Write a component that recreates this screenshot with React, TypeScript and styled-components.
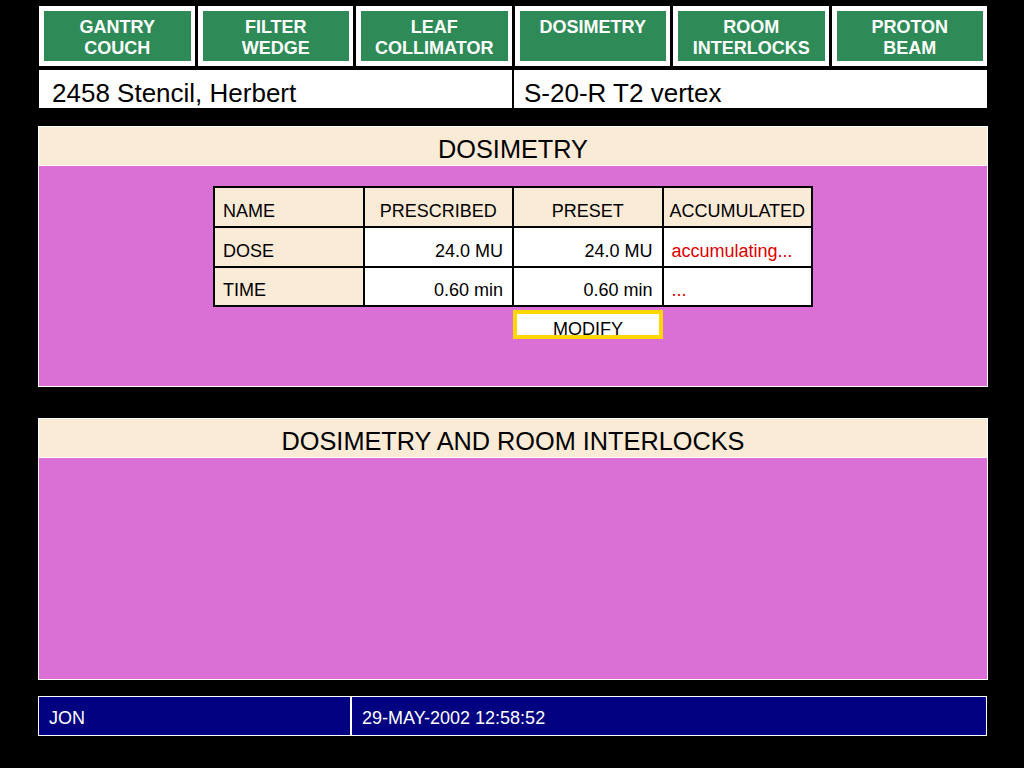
import React from "react";
import styled, { createGlobalStyle } from "styled-components";

const GlobalStyle = createGlobalStyle`
  html, body {
    margin: 0;
    padding: 0;
    background: #000;
  }
  body {
    font-family: "Liberation Sans", Arial, sans-serif;
    color: #000;
  }
  * { box-sizing: border-box; }
`;

const Screen = styled.div`
  width: 1024px;
  height: 768px;
  background: #000;
  padding: 6px 0 0 38px;
  display: flex;
  flex-direction: column;
`;

const TabBar = styled.div`
  display: flex;
  gap: 3px;
  width: 948px;
  height: 60px;
  margin-left: 1px;
`;

const Tab = styled.div`
  flex: 1;
  background: #fff;
  padding: 5px 4px 5px 5px;
`;

const TabFace = styled.div`
  height: 100%;
  background: #2e8b57;
  color: #fff;
  font-weight: bold;
  font-size: 18px;
  line-height: 21px;
  text-align: center;
  padding-top: 6px;
`;

const PatientBar = styled.div`
  display: grid;
  grid-template-columns: 473px 473px;
  gap: 2px;
  width: 948px;
  height: 38px;
  margin: 4px 0 0 1px;
`;

const PatientCell = styled.div<{ $inset: number }>`
  background: #fff;
  font-size: 26px;
  line-height: 26px;
  padding: 10px 0 0 ${(p) => p.$inset}px;
  white-space: nowrap;
  overflow: hidden;
`;

const Panel = styled.section<{ $top: number; $height: number }>`
  width: 950px;
  height: ${(p) => p.$height}px;
  margin-top: ${(p) => p.$top}px;
  border: 1px solid #fff;
  background: #da70d6;
  display: flex;
  flex-direction: column;
`;

const PanelHeader = styled.div`
  height: 39px;
  background: #faebd7;
  border-bottom: 1px solid #fff;
  font-size: 25.3px;
  line-height: 31px;
  padding-top: 7px;
  text-align: center;
`;

const PanelBody = styled.div`
  display: flex;
  flex-direction: column;
  align-items: center;
  padding-top: 20px;
`;

const DoseGrid = styled.div`
  width: 600px;
  display: grid;
  grid-template-columns: repeat(4, 1fr);
  grid-template-rows: 38px 38px 37px;
  gap: 2px;
  padding: 2px;
  background: #000;
`;

const Cell = styled.div<{ $shade?: boolean; $align: "left" | "center" | "right"; $alert?: boolean }>`
  background: ${(p) => (p.$shade ? "#faebd7" : "#fff")};
  color: ${(p) => (p.$alert ? "#dd0000" : "#000")};
  font-size: 18px;
  white-space: nowrap;
  display: flex;
  align-items: center;
  padding-top: 8px;
  justify-content: ${(p) =>
    p.$align === "left" ? "flex-start" : p.$align === "right" ? "flex-end" : "center"};
  padding-left: ${(p) => (p.$align === "left" ? "8px" : "0")};
  padding-right: ${(p) => (p.$align === "right" ? "9px" : "0")};
`;

const ActionRow = styled.div`
  width: 600px;
  display: grid;
  grid-template-columns: 300px 150px;
  margin-top: 3px;
`;

const ModifyButton = styled.button`
  grid-column: 2;
  width: 150px;
  height: 29px;
  border: 4px solid #ffd700;
  background: #fff;
  font-family: inherit;
  font-size: 18px;
  line-height: 20px;
  padding: 5px 0 0;
  margin: 0;
  overflow: hidden;
  text-align: center;
  color: #000;
  cursor: pointer;
`;

const StatusBar = styled.div`
  width: 949px;
  height: 40px;
  margin-top: 16px;
  border: 1px solid #fff;
  background: #000080;
  display: grid;
  grid-template-columns: 311px 1fr;
`;

const StatusCell = styled.div<{ $divider?: boolean }>`
  color: #fff;
  font-size: 18px;
  line-height: 34px;
  padding: 4px 0 0 10px;
  white-space: nowrap;
  border-left: ${(p) => (p.$divider ? "2px solid #fff" : "none")};
`;

const tabs = [
  ["GANTRY", "COUCH"],
  ["FILTER", "WEDGE"],
  ["LEAF", "COLLIMATOR"],
  ["DOSIMETRY"],
  ["ROOM", "INTERLOCKS"],
  ["PROTON", "BEAM"],
];

type Row = { cells: { text: string; shade?: boolean; align: "left" | "center" | "right"; alert?: boolean }[] };

const rows: Row[] = [
  {
    cells: [
      { text: "NAME", shade: true, align: "left" },
      { text: "PRESCRIBED", shade: true, align: "center" },
      { text: "PRESET", shade: true, align: "center" },
      { text: "ACCUMULATED", shade: true, align: "center" },
    ],
  },
  {
    cells: [
      { text: "DOSE", shade: true, align: "left" },
      { text: "24.0 MU", align: "right" },
      { text: "24.0 MU", align: "right" },
      { text: "accumulating...", align: "left", alert: true },
    ],
  },
  {
    cells: [
      { text: "TIME", shade: true, align: "left" },
      { text: "0.60 min", align: "right" },
      { text: "0.60 min", align: "right" },
      { text: "...", align: "left", alert: true },
    ],
  },
];

export default function App() {
  return (
    <>
      <GlobalStyle />
      <Screen>
        <TabBar>
          {tabs.map((lines) => (
            <Tab key={lines.join(" ")}>
              <TabFace>
                {lines.map((l, i) => (
                  <div key={i}>{l}</div>
                ))}
              </TabFace>
            </Tab>
          ))}
        </TabBar>

        <PatientBar>
          <PatientCell $inset={13}>2458 Stencil, Herbert</PatientCell>
          <PatientCell $inset={10}>S-20-R T2 vertex</PatientCell>
        </PatientBar>

        <Panel $top={18} $height={261}>
          <PanelHeader>DOSIMETRY</PanelHeader>
          <PanelBody>
            <DoseGrid>
              {rows.map((r, ri) =>
                r.cells.map((c, ci) => (
                  <Cell key={`${ri}-${ci}`} $shade={c.shade} $align={c.align} $alert={c.alert}>
                    {c.text}
                  </Cell>
                ))
              )}
            </DoseGrid>
            <ActionRow>
              <ModifyButton>MODIFY</ModifyButton>
            </ActionRow>
          </PanelBody>
        </Panel>

        <Panel $top={31} $height={262}>
          <PanelHeader>DOSIMETRY AND ROOM INTERLOCKS</PanelHeader>
        </Panel>

        <StatusBar>
          <StatusCell>JON</StatusCell>
          <StatusCell $divider>29-MAY-2002 12:58:52</StatusCell>
        </StatusBar>
      </Screen>
    </>
  );
}
